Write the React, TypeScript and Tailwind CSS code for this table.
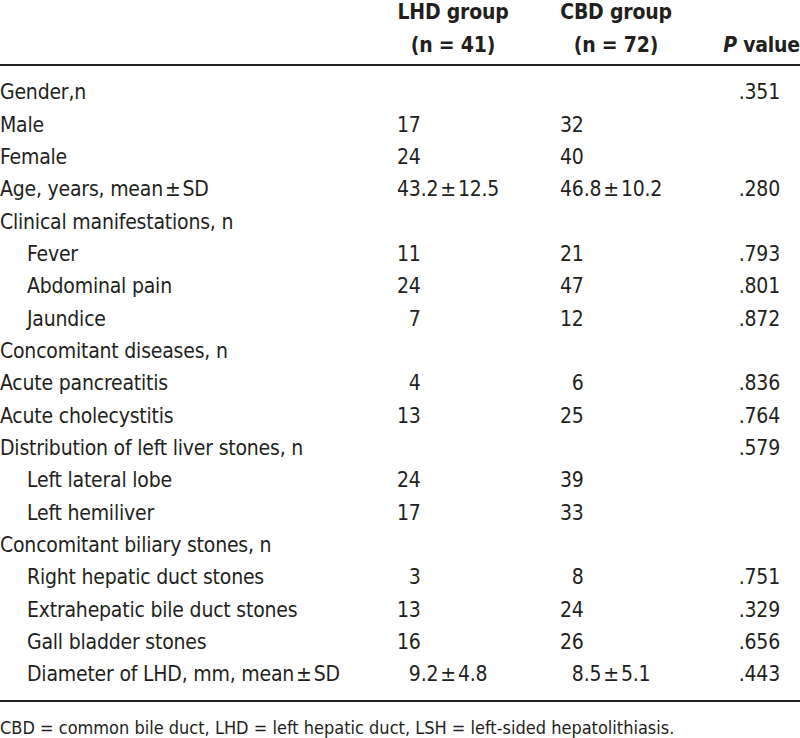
import React from "react";

type Row = {
  label: React.ReactNode;
  indent?: boolean;
  lhd?: React.ReactNode;
  cbd?: React.ReactNode;
  p?: string;
};

// invisible digit keeps single digits lined up with two-digit numbers
const pad = (v: React.ReactNode) => (
  <>
    <span className="invisible">0</span>
    {v}
  </>
);

const Pm = () => <span className="mx-[2px]">±</span>;

const pm = (a: string, b: string) => (
  <>
    {a}
    <Pm />
    {b}
  </>
);

const rows: Row[] = [
  { label: "Gender,n", p: ".351" },
  { label: "Male", lhd: "17", cbd: "32" },
  { label: "Female", lhd: "24", cbd: "40" },
  {
    label: <>Age, years, mean<Pm />SD</>,
    lhd: pm("43.2", "12.5"),
    cbd: pm("46.8", "10.2"),
    p: ".280",
  },
  { label: "Clinical manifestations, n" },
  { label: "Fever", indent: true, lhd: "11", cbd: "21", p: ".793" },
  { label: "Abdominal pain", indent: true, lhd: "24", cbd: "47", p: ".801" },
  { label: "Jaundice", indent: true, lhd: pad("7"), cbd: "12", p: ".872" },
  { label: "Concomitant diseases, n" },
  { label: "Acute pancreatitis", lhd: pad("4"), cbd: pad("6"), p: ".836" },
  { label: "Acute cholecystitis", lhd: "13", cbd: "25", p: ".764" },
  { label: "Distribution of left liver stones, n", p: ".579" },
  { label: "Left lateral lobe", indent: true, lhd: "24", cbd: "39" },
  { label: "Left hemiliver", indent: true, lhd: "17", cbd: "33" },
  { label: "Concomitant biliary stones, n" },
  { label: "Right hepatic duct stones", indent: true, lhd: pad("3"), cbd: pad("8"), p: ".751" },
  { label: "Extrahepatic bile duct stones", indent: true, lhd: "13", cbd: "24", p: ".329" },
  { label: "Gall bladder stones", indent: true, lhd: "16", cbd: "26", p: ".656" },
  {
    label: <>Diameter of LHD, mm, mean<Pm />SD</>,
    indent: true,
    lhd: pad(pm("9.2", "4.8")),
    cbd: pad(pm("8.5", "5.1")),
    p: ".443",
  },
];

export default function App() {
  return (
    <div className="w-[800px] h-[738px] bg-white text-[#231f20] font-['Liberation_Sans_Narrow','DejaVu_Sans_Condensed','Liberation_Sans',sans-serif] overflow-hidden">
      {/* header */}
      <div className="h-[64px] flex flex-col">
        <div className="grid grid-cols-[397px_163px_1fr] -mt-[4px] text-[21px] font-bold leading-[33px] tracking-[-0.2px] whitespace-nowrap">
          <div />
          <div className="w-[112px] text-center">
            <div>LHD group</div>
            <div>(n = 41)</div>
          </div>
          <div className="flex items-end justify-between">
            <div className="w-[112px] text-center">
              <div>CBD group</div>
              <div>(n = 72)</div>
            </div>
            <div>
              <span className="italic">P</span> value
            </div>
          </div>
        </div>
      </div>
      <div className="h-[2px] bg-[#231f20]" />

      {/* body */}
      <div className="pt-[11px] pb-[9px] text-[21px] tracking-[-0.2px] whitespace-nowrap">
        {rows.map((r, i) => (
          <div key={i} className="grid grid-cols-[397px_163px_1fr] h-[32.33px] items-center">
            <div className={r.indent ? "pl-[27px]" : ""}>{r.label}</div>
            <div>{r.lhd}</div>
            <div className="flex justify-between pr-[20px]">
              <span>{r.cbd}</span>
              <span>{r.p}</span>
            </div>
          </div>
        ))}
      </div>
      <div className="h-[2px] bg-[#231f20]" />

      <div className="pt-[12px] text-[18px] whitespace-nowrap">
        CBD = common bile duct, LHD = left hepatic duct, LSH = left-sided hepatolithiasis.
      </div>
    </div>
  );
}
